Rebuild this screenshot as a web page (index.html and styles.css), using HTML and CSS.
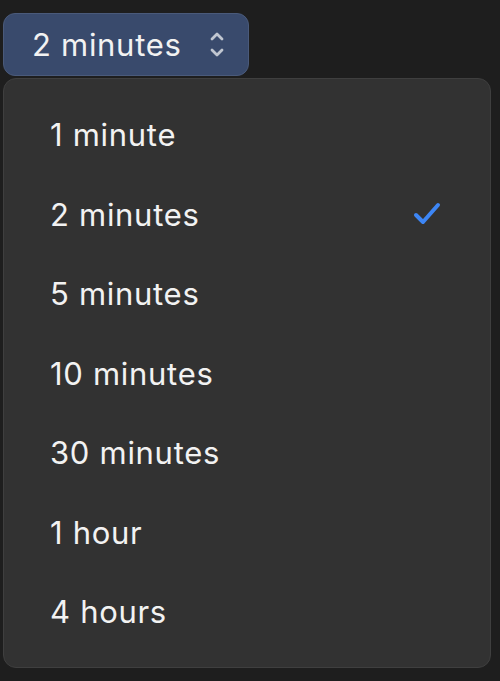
FILE: index.html
```html
<!DOCTYPE html>
<html lang="en">
<head>
  <meta charset="UTF-8">
  <title>Interval picker</title>
  <link rel="stylesheet" href="styles.css">
</head>
<body>
  <button class="select-btn">
    <span>2 minutes</span>
    <svg class="chevrons" width="14" height="26" viewBox="0 0 14 26">
      <path d="M2 7 L7 2 L12 7" />
      <path d="M2 18 L7 23 L12 18" />
    </svg>
  </button>

  <ul class="menu">
    <li class="item">1 minute</li>
    <li class="item">2 minutes
      <svg class="check" width="30" height="26" viewBox="0 0 30 26">
        <path d="M3 14 L10 21 L25 4" />
      </svg>
    </li>
    <li class="item">5 minutes</li>
    <li class="item">10 minutes</li>
    <li class="item">30 minutes</li>
    <li class="item">1 hour</li>
    <li class="item">4 hours</li>
  </ul>
</body>
</html>
```

FILE: styles.css
```css
body {
  margin: 0;
  padding: 13px 0 0 3px;
  background: #1e1e1e;
  font-family: Inter, "Noto Sans", sans-serif;
  color: #f2f2f2;
}
.select-btn {
  display: flex;
  align-items: center;
  justify-content: space-between;
  width: 246px;
  height: 63px;
  padding: 0 24px 0 28px;
  background: #394a6c;
  border: 1px solid #4a5a7a;
  border-radius: 12px;
  color: #f2f2f2;
  font-family: inherit;
  font-size: 31px;
  letter-spacing: 0.7px;
  box-sizing: border-box;
}
.chevrons path {
  fill: none;
  stroke: #c0c6d0;
  stroke-width: 2.8;
  stroke-linecap: round;
  stroke-linejoin: round;
}
.menu {
  list-style: none;
  margin: 2px 0 0 0;
  padding: 16px 0 15px 0;
  width: 488px;
  box-sizing: border-box;
  background: #323232;
  border: 1px solid #3f3f3f;
  border-radius: 13px;
}
.item {
  display: flex;
  align-items: center;
  justify-content: space-between;
  height: 79.5px;
  padding: 0 47px 0 46px;
  font-size: 31px;
  letter-spacing: 0.7px;
}
.check path {
  fill: none;
  stroke: #3d86f5;
  stroke-width: 4;
  stroke-linecap: round;
  stroke-linejoin: round;
}
```
